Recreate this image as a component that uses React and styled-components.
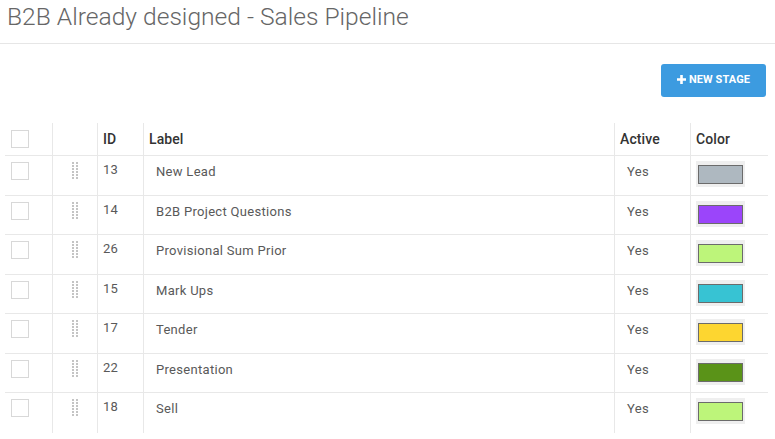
import React from "react";
import styled, { createGlobalStyle } from "styled-components";

const Global = createGlobalStyle`
  html, body { margin: 0; padding: 0; background: #fff; }
  body { font-family: Roboto, "Noto Sans", Arial, sans-serif; }
  * { box-sizing: border-box; }
`;

const Page = styled.div`
  width: 775px;
`;

const TitleBar = styled.header`
  height: 44px;
  padding: 3px 0 0 7px;
  border-bottom: 1px solid #e6e6e6;
`;

const Title = styled.h1`
  margin: 0;
  font-size: 24.6px;
  line-height: 28px;
  font-weight: 300;
  color: #666;
`;

const Toolbar = styled.div`
  display: flex;
  justify-content: flex-end;
  padding: 20px 9px 0 0;
`;

const PrimaryButton = styled.button`
  display: flex;
  align-items: center;
  justify-content: center;
  gap: 3px;
  width: 105px;
  height: 33px;
  border: none;
  border-radius: 3px;
  background: #3c9be0;
  color: #fff;
  font-family: Roboto, Arial, sans-serif;
  font-size: 11px;
  font-weight: 700;
  letter-spacing: 0.1px;
  padding: 0 0 2px;
`;

const Table = styled.div`
  margin: 26px 7px 0 5px;
`;

const Row = styled.div`
  display: grid;
  grid-template-columns: 46.5px 45.5px 46px 471px 76px 1fr;
  height: ${(p) => (p.$head ? "33px" : "39.57px")};
  border-bottom: ${(p) => (p.$last ? "none" : "1px solid #e8e8e8")};
`;

const Cell = styled.div`
  display: flex;
  align-items: flex-start;
  padding-top: ${(p) => p.$top || 0}px;
  padding-left: ${(p) => p.$left || 0}px;
  justify-content: ${(p) => (p.$center ? "center" : "flex-start")};
  border-left: ${(p) => (p.$first ? "none" : "1px solid #e8e8e8")};
  color: #595959;
  font-size: 13px;
  letter-spacing: 0.3px;
  line-height: 16px;
`;

const HeadCell = styled(Cell)`
  align-items: center;
  padding-top: 0;
  color: #333;
  font-size: 14px;
  font-weight: 500;
  letter-spacing: 0.1px;
`;

const Checkbox = styled.span`
  display: block;
  width: 18px;
  height: 18px;
  border: 1px solid #d8d8d8;
  background: #fff;
`;

const Swatch = styled.span`
  display: block;
  width: 49px;
  height: 26px;
  padding: 4px 2px 3px;
  background: #efefef;
`;

const SwatchFill = styled.span`
  display: block;
  width: 100%;
  height: 100%;
  border: 1px solid #6b6b6b;
  background: ${(p) => p.$color};
`;

const DragHandle = () => (
  <svg width="6" height="18" viewBox="0 0 6 18">
    {[0, 3, 6, 9, 12, 15].map((y) => (
      <g key={y} fill="#c4c4c4">
        <rect x="0" y={y} width="2" height="2" />
        <rect x="4" y={y} width="2" height="2" />
      </g>
    ))}
  </svg>
);

const PlusIcon = () => (
  <svg width="9" height="9" viewBox="0 0 9 9">
    <path d="M3.2 0h2.6v3.2H9v2.6H5.8V9H3.2V5.8H0V3.2h3.2z" fill="#fff" />
  </svg>
);

const stages = [
  { id: 13, label: "New Lead", color: "#aeb8c0" },
  { id: 14, label: "B2B Project Questions", color: "#9b45fa" },
  { id: 26, label: "Provisional Sum Prior", color: "#bdf57a" },
  { id: 15, label: "Mark Ups", color: "#37c3d3" },
  { id: 17, label: "Tender", color: "#fdd630" },
  { id: 22, label: "Presentation", color: "#5a9318" },
  { id: 18, label: "Sell", color: "#bdf57a" },
];

export default function App() {
  return (
    <Page>
      <Global />
      <TitleBar>
        <Title>B2B Already designed - Sales Pipeline</Title>
      </TitleBar>
      <Toolbar>
        <PrimaryButton>
          <PlusIcon />
          NEW STAGE
        </PrimaryButton>
      </Toolbar>
      <Table>
        <Row $head>
          <HeadCell $first $left={6}>
            <Checkbox />
          </HeadCell>
          <HeadCell />
          <HeadCell $left={5}>ID</HeadCell>
          <HeadCell $left={5}>Label</HeadCell>
          <HeadCell $left={5}>Active</HeadCell>
          <HeadCell $left={5}>Color</HeadCell>
        </Row>
        {stages.map((s, i) => (
          <Row key={s.id} $last={i === stages.length - 1}>
            <Cell $first $left={6} $top={6}>
              <Checkbox />
            </Cell>
            <Cell $center $top={6}>
              <DragHandle />
            </Cell>
            <Cell $left={5} $top={6}>{s.id}</Cell>
            <Cell $left={12} $top={8}>{s.label}</Cell>
            <Cell $left={12} $top={8}>Yes</Cell>
            <Cell $left={5} $top={5}>
              <Swatch>
                <SwatchFill $color={s.color} />
              </Swatch>
            </Cell>
          </Row>
        ))}
      </Table>
    </Page>
  );
}
